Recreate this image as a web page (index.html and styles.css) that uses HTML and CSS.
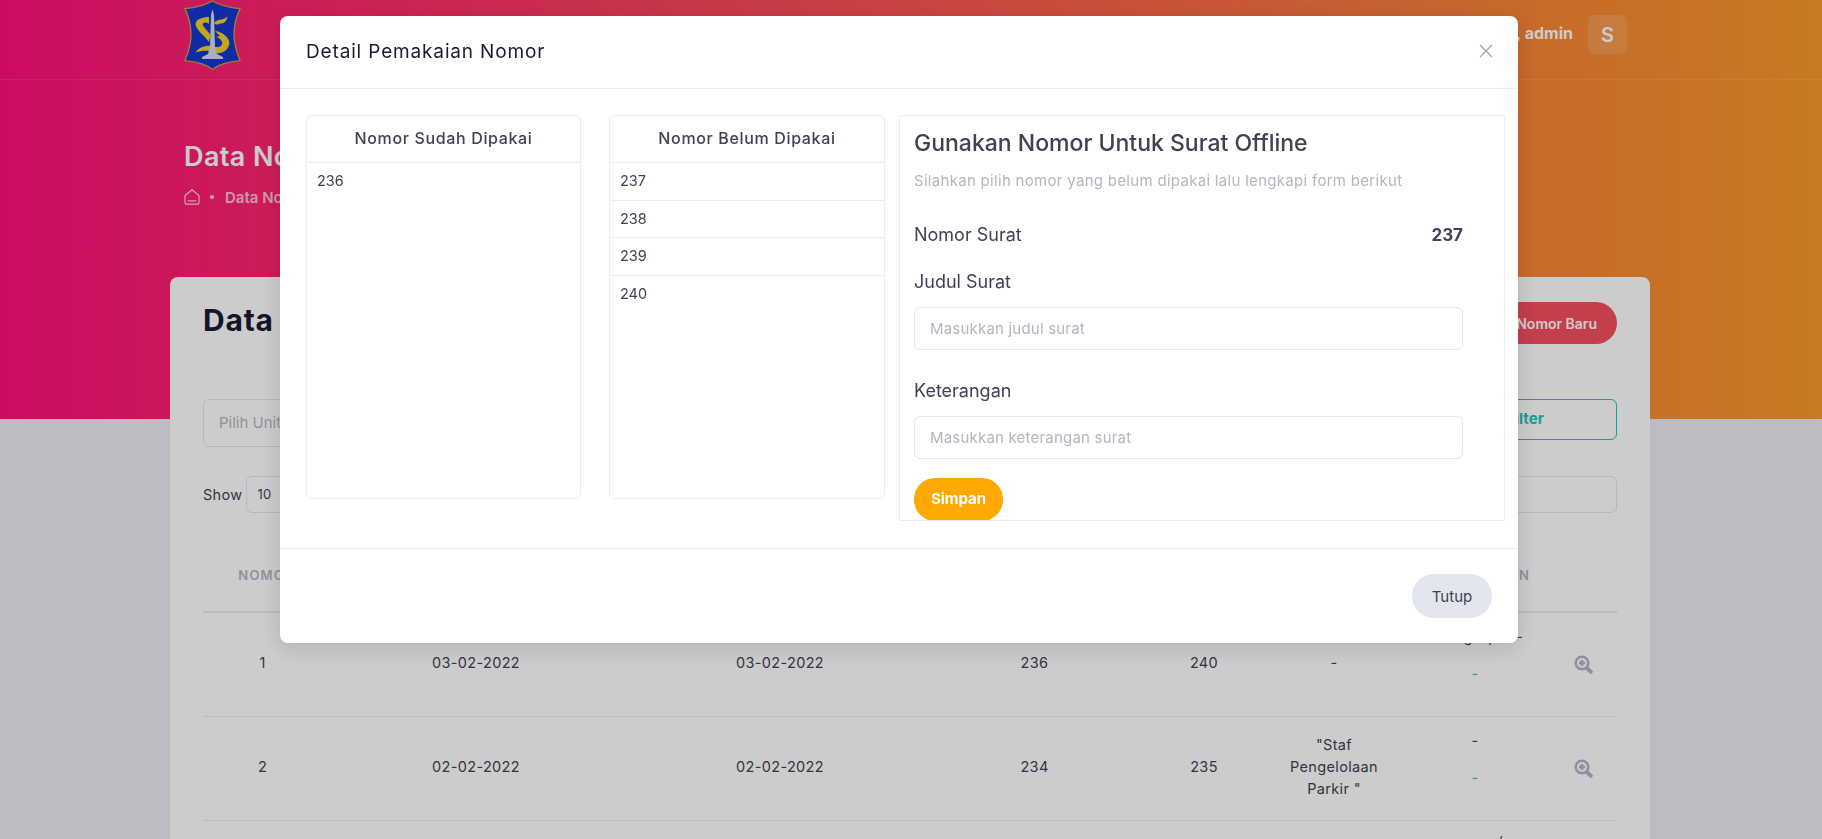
FILE: index.html
```html
<!DOCTYPE html>
<html lang="id">
<head>
<meta charset="utf-8">
<title>Data Nomor Surat</title>
<link rel="stylesheet" href="styles.css">
</head>
<body>
<section class="hero">
  <nav class="topbar">
    <svg class="logo" viewBox="0 0 57 70" width="57" height="70" aria-label="Logo">
      <path class="logo-shield" d="M28.500 .8C24 4 12 8 1 8.600 4 15 7 25 7 35 7 45 4 53 1 60.600 12 61.500 23 65 28.500 69.400 34 65 45 61.500 56 60.600 53 53 50 45 50 35 50 25 53 15 56 8.600 45 8 33 4 28.500 .8Z"/>
      <path class="logo-gold" d="M25 17C19 17 12 19 11.500 24 12 30 20 35 25 42L26.500 35C24 31 19 27 18.500 24 20 22 23 22 25 24Z"/>
      <path class="logo-gold" d="M30 23C34 18 39 21 43.500 16.500 43 21 40 24 36 23.500 34 25 32 25 30 23Z"/>
      <path class="logo-gold" d="M31 31C36 31 45 36 45.500 43 45 50 37 55 31 52.500 25 50 18 50 11.500 52.500 15 47 23 44.500 30 46.500 36 48.500 39 45 38 42 37 39 34 37.500 32 37L36 36Z"/>
      <path class="logo-tower" d="M28.500 9 30 15 31 47 33 54 39 57 39 59H18V57L24 54 26 47 27 15Z"/>
    </svg>
    <div class="user">
      <span class="user-name">Hi, admin</span>
      <span class="avatar">S</span>
    </div>
  </nav>
  <div class="page-head">
    <h1 class="page-title">Data Nomor Surat</h1>
    <div class="crumbs">
      <svg class="crumb-home" viewBox="0 0 16 16" width="16" height="16"><path d="M8 .7 15 6.500V13.800A1.400 1.400 0 0 1 13.600 15.200H2.400A1.400 1.400 0 0 1 1 13.800V6.500ZM3.800 11.800H12.200"/></svg>
      <span class="crumb-dot"></span>
      <span class="crumb-text">Data Nomor Surat</span>
    </div>
  </div>
</section>

<main class="card">
  <header class="card-head">
    <h2 class="card-title">Data Nomor Surat</h2>
    <button class="btn-danger">Tambah Nomor Baru</button>
  </header>
  <div class="filter-row">
    <div class="fake-select">Pilih Unit</div>
    <button class="btn-filter">Filter</button>
  </div>
  <div class="tools-row">
    <div class="show"><span>Show</span><span class="show-box">10</span></div>
    <input class="search" aria-label="Search">
  </div>
  <table class="data">
    <colgroup>
      <col class="c1"><col class="c2"><col class="c3"><col class="c4"><col class="c5"><col class="c6"><col class="c7"><col class="c8">
    </colgroup>
    <thead>
      <tr><th>Nomor</th><th>Tanggal</th><th>Tanggal</th><th>Awal</th><th>Akhir</th><th>Unit</th><th class="th-wide">Keterangan</th><th></th></tr>
    </thead>
    <tbody>
      <tr>
        <td>1</td><td>03-02-2022</td><td>03-02-2022</td><td>236</td><td>240</td><td>-</td>
        <td class="stack"><p>Kabag Uptd -</p><p class="green">-</p></td>
        <td class="action"><svg class="zoom-ic" viewBox="0 0 20 20" width="20" height="20"><circle cx="8" cy="8" r="6.300"/><path d="M8 5V11M5 8H11"/><path class="handle" d="M12.800 12.800 18 18"/></svg></td>
      </tr>
      <tr>
        <td>2</td><td>02-02-2022</td><td>02-02-2022</td><td>234</td><td>235</td><td>"Staf Pengelolaan Parkir "</td>
        <td class="stack"><p>-</p><p class="green">-</p></td>
        <td class="action"><svg class="zoom-ic" viewBox="0 0 20 20" width="20" height="20"><circle cx="8" cy="8" r="6.300"/><path d="M8 5V11M5 8H11"/><path class="handle" d="M12.800 12.800 18 18"/></svg></td>
      </tr>
      <tr>
        <td></td><td></td><td></td><td></td><td></td><td></td>
        <td class="stack"><p>nomor a/n</p></td>
        <td></td>
      </tr>
    </tbody>
  </table>
</main>

<div class="backdrop">
  <div class="modal" role="dialog">
    <header class="modal-head">
      <h3 class="modal-title">Detail Pemakaian Nomor</h3>
      <svg class="close" viewBox="0 0 14 14" width="14" height="14"><path d="M1 1 13 13M13 1 1 13"/></svg>
    </header>
    <div class="modal-body">
      <section class="list-card list-a">
        <h4 class="list-head">Nomor Sudah Dipakai</h4>
        <ul class="list"><li>236</li></ul>
      </section>
      <section class="list-card list-b">
        <h4 class="list-head">Nomor Belum Dipakai</h4>
        <ul class="list"><li>237</li><li>238</li><li>239</li><li>240</li></ul>
      </section>
      <section class="form-panel">
        <h3 class="form-title">Gunakan Nomor Untuk Surat Offline</h3>
        <p class="form-sub">Silahkan pilih nomor yang belum dipakai lalu lengkapi form berikut</p>
        <div class="form-inner">
          <div class="number-row"><span>Nomor Surat</span><strong>237</strong></div>
          <label class="field-label" for="judul">Judul Surat</label>
          <input class="field" id="judul" placeholder="Masukkan judul surat">
          <label class="field-label second" for="ket">Keterangan</label>
          <input class="field" id="ket" placeholder="Masukkan keterangan surat">
        </div>
        <button class="btn-save">Simpan</button>
      </section>
    </div>
    <footer class="modal-foot"><button class="btn-close">Tutup</button></footer>
  </div>
</div>
</body>
</html>
```

FILE: styles.css
```css
* { box-sizing: border-box; }
html, body { height: 100%; overflow: hidden; }
body {
  margin: 0;
  background: #ebedf3;
  color: #3f4254;
  font-family: Inter, "Liberation Sans", sans-serif;
  font-size: 14px;
}
h1, h2, h3, h4, p, ul { margin: 0; padding: 0; }
button { font-family: inherit; border: 0; cursor: pointer; }
input { font-family: inherit; }

.hero {
  height: 419px;
  background: linear-gradient(90deg, #ff0f7b, #f89b29);
  color: #fff;
}
.topbar {
  height: 80px;
  padding: 0 195px 0 184px;
  display: flex;
  justify-content: space-between;
  border-bottom: 1px solid rgba(255, 255, 255, .1);
}
.logo { display: block; }
.logo-shield { fill: #1338d0; stroke: #c9a23a; stroke-width: 1.300; }
.logo-gold { fill: #f2d21f; }
.logo-tower { fill: #d8dbe6; }
.user { display: flex; align-items: flex-start; gap: 15px; padding-top: 15px; }
.user-name { font-size: 16px; font-weight: 700; line-height: 36px; }
.avatar {
  width: 39px;
  height: 39px;
  border-radius: 6px;
  background: rgba(255, 255, 255, .14);
  font-size: 20px;
  font-weight: 600;
  display: flex;
  align-items: center;
  justify-content: center;
}
.page-head { padding: 59px 0 0 184px; }
.page-title { font-size: 27px; font-weight: 600; line-height: 36px; letter-spacing: .4px; }
.crumbs { display: flex; align-items: center; margin-top: 11px; height: 22px; }
.crumb-home { fill: none; stroke: rgba(255, 255, 255, .8); stroke-width: 1.200; }
.crumb-dot { width: 4px; height: 4px; margin: 0 11px 0 10px; border-radius: 50%; background: rgba(255, 255, 255, .8); }
.crumb-text { font-size: 15px; font-weight: 600; color: rgba(255, 255, 255, .72); }

.card {
  width: 1480px;
  height: 700px;
  margin: -142px 0 0 170px;
  padding: 25px 33px 0;
  background: #fff;
  border-radius: 8px;
}
.card-head { display: flex; justify-content: space-between; align-items: flex-start; height: 42px; }
.card-title { font-size: 30px; font-weight: 700; line-height: 36px; letter-spacing: .8px; color: #181c32; }
.btn-danger {
  height: 42px;
  padding: 0 20px;
  border-radius: 21px;
  background: #f64e60;
  color: #fff;
  font-size: 14px;
  font-weight: 600;
}
.filter-row { display: flex; justify-content: space-between; align-items: flex-start; margin-top: 55px; }
.fake-select {
  width: 500px;
  height: 48px;
  padding: 0 15px;
  border: 1px solid #e4e6ef;
  border-radius: 6px;
  color: #b5b5c3;
  line-height: 46px;
  font-size: 15px;
}
.btn-filter {
  width: 300px;
  height: 41px;
  padding: 0 0 2px 116px;
  background: #fff;
  border: 1px solid #1bc5bd;
  border-radius: 6px;
  color: #1bc5bd;
  font-size: 15px;
  font-weight: 700;
}
.tools-row { display: flex; justify-content: space-between; margin-top: 29px; }
.show { display: flex; align-items: center; gap: 4px; font-size: 14.500px; letter-spacing: .3px; }
.show-box {
  width: 80px;
  height: 37px;
  padding-left: 10px;
  border: 1px solid #e4e6ef;
  border-radius: 6px;
  line-height: 35px;
  font-size: 13px;
}
.search { width: 300px; height: 37px; border: 1px solid #e4e6ef; border-radius: 6px; background: transparent; }

.data { width: 1414px; margin-top: 20px; table-layout: fixed; border-collapse: collapse; }
.c1 { width: 119px; }
.c2 { width: 308px; }
.c3 { width: 300px; }
.c4 { width: 209px; }
.c5 { width: 130px; }
.c6 { width: 130px; }
.c7 { width: 152px; }
.c8 { width: 66px; }
.data th {
  height: 79px;
  padding: 6px 0 0;
  border-bottom: 2px solid #e9e9ec;
  color: #b5b5c3;
  font-size: 13px;
  font-weight: 600;
  letter-spacing: 1.200px;
  text-transform: uppercase;
}
.data th:first-child { padding-left: 8px; }
.data th.th-wide { letter-spacing: 2.200px; }
.data td {
  height: 104px;
  padding: 0 18px 2px;
  border-bottom: 1px solid #ebedf3;
  text-align: center;
  font-size: 14.500px;
  line-height: 22px;
  letter-spacing: .35px;
}
.data td.stack { vertical-align: top; padding: 13px 0 0; }
.data tr:last-child td.stack { padding-top: 10px; }
.stack p { margin-bottom: 15px; }
.green { color: #1bc5bd; }
.data td.action { padding: 1px 0 0 23px; }
.zoom-ic { display: block; fill: none; stroke: #b5b5c3; stroke-width: 2.600; }
.zoom-ic .handle { stroke-width: 3.800; }

.backdrop {
  position: fixed;
  inset: 0;
  padding: 16px 304px 0 280px;
  background: rgba(0, 0, 0, .2);
}
.modal {
  height: 627px;
  background: #fff;
  border-radius: 8px;
  box-shadow: 0 5px 22px rgba(0, 0, 0, .14);
  display: flex;
  flex-direction: column;
}
.modal-head {
  height: 73px;
  padding: 0 25px 2px 26px;
  display: flex;
  align-items: center;
  justify-content: space-between;
  border-bottom: 1px solid #ebedf3;
}
.modal-title { font-size: 19px; font-weight: 400; color: #181c32; letter-spacing: .85px; }
.close { fill: none; stroke: #a0a1ab; stroke-width: 1.200; }
.modal-body {
  height: 460px;
  padding: 26px 13px 0 26px;
  display: flex;
  align-items: flex-start;
  border-bottom: 1px solid #ebedf3;
}
.list-card {
  height: 384px;
  border: 1px solid #ebedf3;
  border-radius: 6px;
}
.list-a { width: 275px; margin-right: 28px; }
.list-b { width: 276px; margin-right: 14px; }
.list-head {
  height: 47px;
  border-bottom: 1px solid #ebedf3;
  text-align: center;
  font-size: 16px;
  font-weight: 500;
  line-height: 44px;
  letter-spacing: .65px;
}
.list { list-style: none; }
.list li {
  height: 37.500px;
  padding-left: 10px;
  border-bottom: 1px solid #ebedf3;
  font-size: 14.500px;
  line-height: 35px;
}
.list li:last-child { border-bottom: 0; }
.form-panel {
  flex: 1;
  height: 406px;
  padding: 0 14px;
  border: 1px solid #ebedf3;
  overflow: hidden;
}
.form-title { margin-top: 12px; font-size: 23px; font-weight: 500; line-height: 30px; }
.form-sub { margin-top: 12px; color: #b5b5c3; font-size: 15px; line-height: 22px; letter-spacing: .3px; }
.form-inner { width: 549px; }
.number-row {
  display: flex;
  justify-content: space-between;
  margin-top: 31px;
  font-size: 18px;
  line-height: 24px;
}
.number-row strong { font-size: 17px; font-weight: 700; }
.field-label { display: block; margin-top: 23px; font-size: 18px; line-height: 24px; }
.field-label.second { margin-top: 29px; }
.field {
  display: block;
  width: 100%;
  height: 43px;
  margin-top: 13px;
  padding: 0 15px;
  border: 1px solid #e4e6ef;
  border-radius: 6px;
  font-size: 15px;
  letter-spacing: .2px;
}
.field::placeholder { color: #b5b5c3; }
.btn-save {
  display: block;
  width: 89px;
  height: 43px;
  margin-top: 19px;
  padding: 0 0 3px;
  border-radius: 21px;
  background: #ffa800;
  color: #fff;
  font-size: 15px;
  font-weight: 700;
}
.modal-foot { flex: 1; padding: 25px 26px 0; display: flex; justify-content: flex-end; align-items: flex-start; }
.btn-close {
  width: 80px;
  height: 44px;
  border-radius: 22px;
  background: #e4e6ef;
  color: #3f4254;
  font-size: 15px;
  font-weight: 400;
}
```
